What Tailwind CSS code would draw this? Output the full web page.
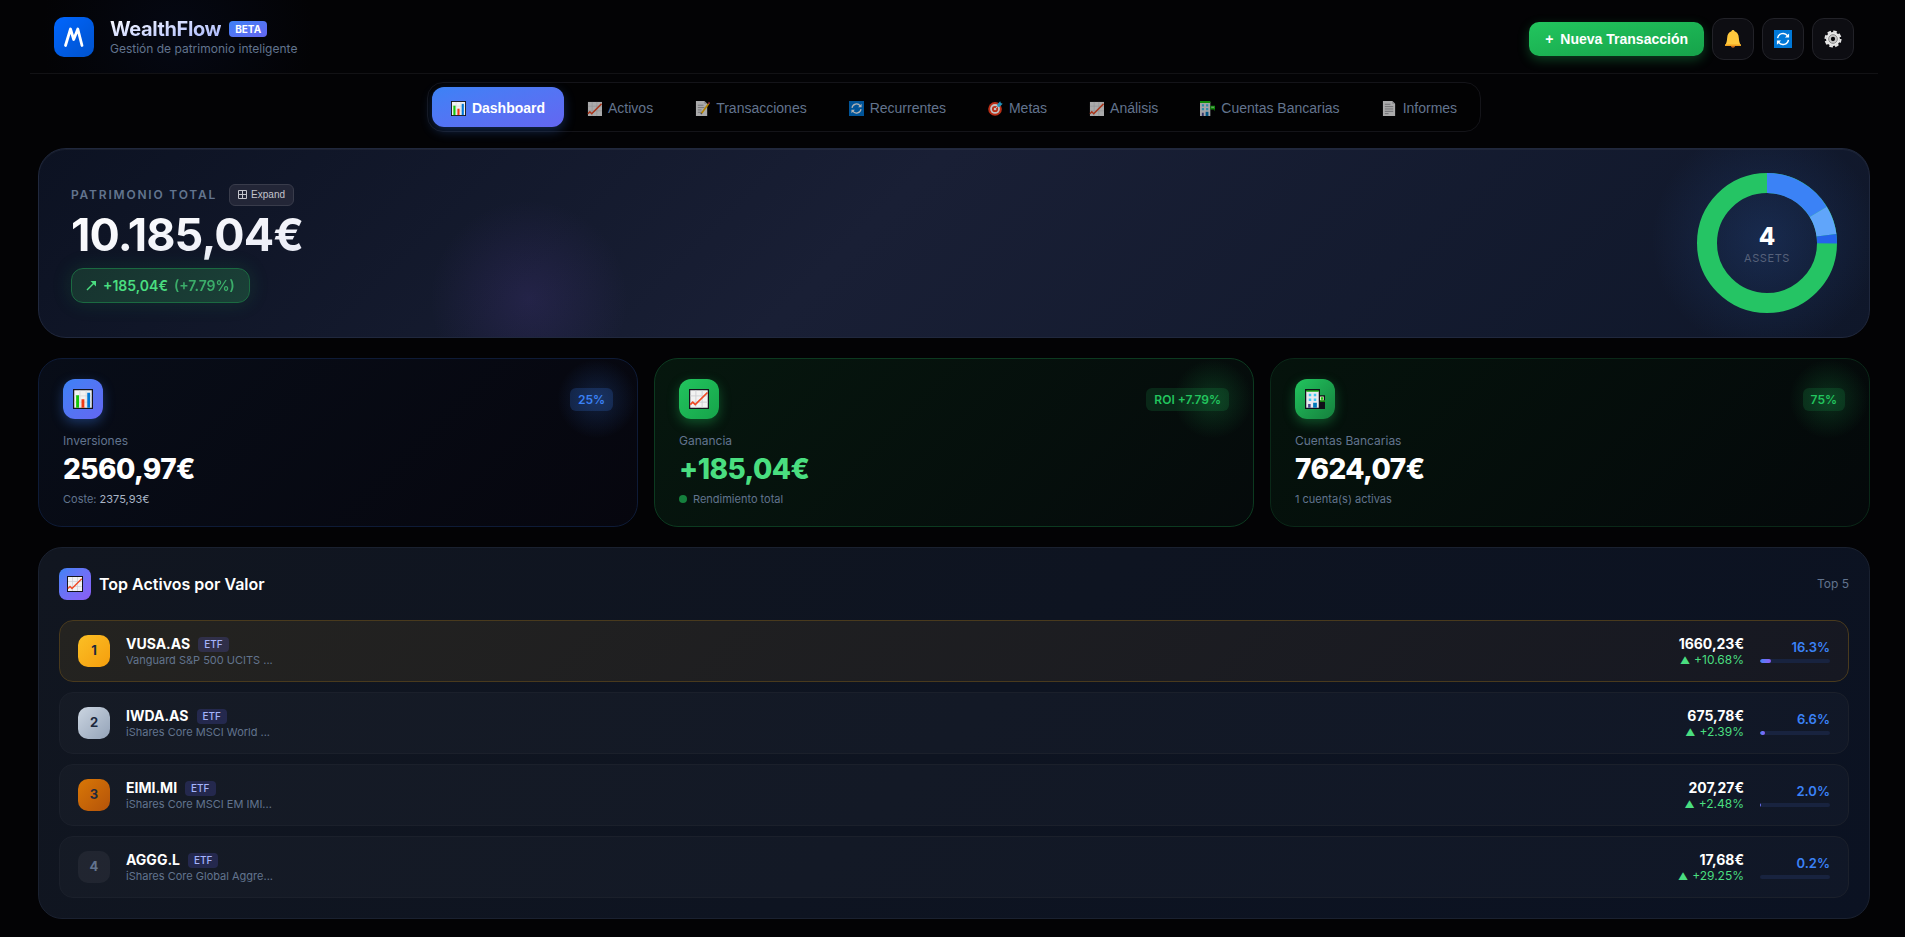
<!DOCTYPE html>
<html lang="es">

<head>
  <meta charset="UTF-8">
  <meta name="viewport" content="width=device-width, initial-scale=1.0">
  <title>WealthFlow</title>
  <script src="https://cdn.jsdelivr.net/npm/@tailwindcss/browser@4"></script>
</head>

<body class="min-h-screen bg-[#030305] font-['Inter',sans-serif] text-white">
  <!-- Icon sprite -->
  <svg class="hidden">
    <symbol id="i-bars" viewBox="0 0 16 16">
      <path fill="#14141c" d="M0 0h16v16H0z" />
      <path fill="#f2f2f2" d="M1 1h14v14H1z" />
      <path stroke="#d5d5d8" stroke-width=".6" d="M5.5 1v14M10.5 1v14M1 5.5h14M1 10.5h14" />
      <path fill="#16c60c" d="M2.5 5h2.3v10H2.5z" />
      <path fill="#f03a17" d="M6.8 8.2h2.3V15H6.8z" />
      <path fill="#0078d7" d="M11.4 3h2.3v12h-2.3z" />
    </symbol>
    <symbol id="i-trend" viewBox="0 0 16 16">
      <path fill="#14141c" d="M0 0h16v16H0z" />
      <path fill="#f2f2f2" d="M1 1h14v14H1z" />
      <path stroke="#cfcfd2" stroke-width=".7" d="M5.5 1v14M10.5 1v14M1 5.5h14M1 10.5h14" />
      <path fill="none" stroke="#f04a24" stroke-width="1.4" d="M1 12.5l2-2 2 2L14.8 2.8" />
    </symbol>
    <symbol id="i-trend-flat" viewBox="0 0 16 16">
      <path fill="#f2f2f2" d="M1 1h15v15H1z" />
      <path stroke="#cfcfd2" stroke-width=".7" d="M5.5 1v15M10.5 1v15M1 5.5h15M1 10.5h15" />
      <path fill="none" stroke="#f04a24" stroke-width="1.6" d="M1 13.5l2-2 2 2L15.5 3" />
    </symbol>
    <symbol id="i-memo" viewBox="0 0 16 16">
      <path fill="#f2f2f2" d="M1 0h9l3 3v13H1z" />
      <path fill="#b9b9bd" d="M10 0l3 3h-3z" />
      <path stroke="#a0a0a5" d="M3 4.5h6M3 7h7M3 9.500h4M3 12h5" />
      <path stroke="#ffb900" stroke-width="1.8" d="M7 13L14.500 3" />
      <path stroke="#e74856" stroke-width="1.8" d="M14.500 3l1-1.400" />
      <path stroke="#55555c" stroke-width="1.400" d="M6.300 14l.7-1" />
    </symbol>
    <symbol id="i-sync" viewBox="0 0 16 16">
      <path fill="#0078d7" d="M0 0h16v16H0z" />
      <path fill="none" stroke="#fff" stroke-width="1.300" d="M3.200 7.300a4.900 4.900 0 0 1 8.800-2.200M12.800 8.700A4.900 4.900 0 0 1 4 10.900" />
      <path fill="#fff" d="M13.400 3v3.700H9.700zM2.600 13V9.300h3.700z" />
    </symbol>
    <symbol id="i-target" viewBox="0 0 16 16">
      <circle cx="7.500" cy="8.500" r="7.300" fill="#e8391b" />
      <circle cx="7.500" cy="8.500" r="5.200" fill="#f2f2f2" />
      <circle cx="7.500" cy="8.500" r="3.300" fill="#e8391b" />
      <circle cx="7.500" cy="8.500" r="1.400" fill="#f2f2f2" />
      <path stroke="#f2f2f2" d="M7.500 8.500l4-4" />
      <path fill="#26b5e8" d="M10 3.500L13 .3l.7 1.700 2 .8-3.300 3.200-2.400.2z" />
    </symbol>
    <symbol id="i-bank" viewBox="0 0 16 16">
      <path fill="#101018" d="M0 0h12v5h4v11H0z" />
      <path fill="#e9e9ee" d="M1 1.500h10V15H1z" />
      <path fill="#16a80c" d="M1 1h10v1.200H1zM12 9h4v1.200h-4z" />
      <path fill="#d8f0b8" d="M12 6h3v3h-3z" />
      <path fill="#16c60c" d="M12.800 6.500h1.600v2h-1.600z" />
      <path fill="#41c8f0" d="M3 3.700h2v2H3zM7 3.700h2v2H7zM3 7.500h2v2H3zM7 7.500h2v2H7z" />
      <path fill="#0078b8" d="M6.500 11h3v4h-3z" />
      <path fill="#4a4a90" d="M2.500 12h2v3h-2z" />
    </symbol>
    <symbol id="i-bank-flat" viewBox="0 0 16 16">
      <path fill="#e9e9ee" d="M0 1h11v15H0z" />
      <path fill="#16c60c" d="M0 0h11v2H0zM11 5h5v4h-5z" />
      <path fill="#8be08b" d="M12 6h3v1.500h-3z" />
      <path fill="#16a80c" d="M15 9h1v1h-1z" />
      <path fill="#41c8f0" d="M2 3.500h2.300v2.300H2zM6.500 3.500h2.300v2.300H6.500zM2 7.500h2.300v2.300H2zM6.500 7.500h2.300v2.300H6.500z" />
      <path fill="#0078b8" d="M6 11.500h3V16H6z" />
      <path fill="#4a4a90" d="M2 12.500h2V16H2z" />
    </symbol>
    <symbol id="i-page" viewBox="0 0 16 16">
      <path fill="#f2f2f2" d="M1 0h10l3 3v13H1z" />
      <path fill="#b9b9bd" d="M11 0l3 3h-3z" />
      <path stroke="#98989d" d="M3 3.500h6M3 6h9M3 8.500h9M3 11h9M3 13.500h4" />
    </symbol>
    <symbol id="i-bell" viewBox="0 0 16 16">
      <path fill="#c8671b" d="M6 13.500h4c0 1.300-.8 2.200-2 2.200s-2-.9-2-2.200z" />
      <path fill="#ffc83d" d="M8 0c.8 0 1.300.5 1.400 1.200C12 2 13 4.200 13.200 7c.2 3 .6 4.700 1.800 6.200v1H1v-1C2.200 11.700 2.600 10 2.800 7 3 4.200 4 2 6.600 1.200 6.700.5 7.200 0 8 0z" />
      <path fill="#f0a01e" d="M1.200 12.900h13.600l.2 1.300H1z" />
    </symbol>
    <symbol id="i-gear" viewBox="0 0 16 16">
      <circle cx="8" cy="8" r="6.700" fill="none" stroke="#e6e6e6" stroke-width="1.800" stroke-dasharray="3.262 2" />
      <circle cx="8" cy="8" r="6.200" fill="#e6e6e6" />
      <circle cx="8" cy="8" r="3.900" fill="#c8c8c8" stroke="#858585" stroke-width=".8" />
      <circle cx="8" cy="8" r="1.900" fill="#050508" />
    </symbol>
  </svg>

  <div class="pr-[27px] pl-[30px]">
    <!-- Header -->
    <header class="flex h-[74px] items-center justify-between border-b border-[#121215] bg-[radial-gradient(circle_at_8%_50%,#050813_0,transparent_8%)] px-6">
      <div class="flex items-center gap-4">
        <div class="flex size-10 items-center justify-center rounded-[10px] bg-linear-to-br from-[#0066ff] to-[#0052cc]">
          <svg class="size-6" viewBox="0 0 24 24" fill="none" stroke="#fff" stroke-width="2.800" stroke-linecap="round" stroke-linejoin="round">
            <path d="M3.500 20.500L8.500 4l3.200 10.500L15.800 4l4.200 16.500" />
          </svg>
        </div>
        <div>
          <div class="flex items-center gap-2">
            <h1 class="bg-linear-to-br from-white to-[#a5b4fc] bg-clip-text text-[20px] leading-6 font-bold tracking-[-0.02em] text-transparent">WealthFlow</h1>
            <span class="rounded bg-linear-to-br from-[#3b82f6] to-[#6366f1] px-[6px] text-[10px] leading-4 font-bold">BETA</span>
          </div>
          <p class="text-[12px] leading-4 text-slate-500">Gestión de patrimonio inteligente</p>
        </div>
      </div>
      <div class="flex items-center gap-2 pt-1">
        <button class="h-[34px] rounded-[10px] bg-linear-to-br from-[#22c55e] to-[#16a34a] px-4 pt-px font-['Liberation_Sans',sans-serif] text-[14px] font-bold shadow-[0_4px_12px_rgba(34,197,94,0.3)]"><span class="mr-[3px]">+</span> Nueva Transacción</button>
        <button aria-label="Notificaciones" class="flex size-[42px] items-center justify-center rounded-[12px] border border-[#222228] bg-[#0d0d12]">
          <svg class="size-[18px]"><use href="#i-bell" /></svg>
        </button>
        <button aria-label="Actualizar" class="flex size-[42px] items-center justify-center rounded-[12px] border border-[#222228] bg-[#0d0d12]">
          <svg class="size-[18px]"><use href="#i-sync" /></svg>
        </button>
        <button aria-label="Ajustes" class="flex size-[42px] items-center justify-center rounded-[12px] border border-[#222228] bg-[#0d0d12]">
          <svg class="size-[18px]"><use href="#i-gear" /></svg>
        </button>
      </div>
    </header>

    <div class="px-2">
      <!-- Tabs -->
      <nav class="mx-auto mt-2 flex w-fit gap-1 rounded-[16px] border border-[#141419] bg-[#020203] p-1 font-['Liberation_Sans',sans-serif] text-[14px] text-slate-500">
        <button class="flex h-10 items-center gap-[6px] rounded-[12px] bg-linear-to-br from-[#3b82f6] to-[#6366f1] px-[19px] pt-[2px] font-bold text-white shadow-[0_4px_12px_rgba(59,130,246,0.3)]">
          <svg class="size-[15px]"><use href="#i-bars" /></svg>Dashboard
        </button>
        <button class="flex h-10 items-center gap-[6px] rounded-[12px] px-[19px] pt-[2px]">
          <svg class="size-[15px] opacity-70"><use href="#i-trend-flat" /></svg>Activos
        </button>
        <button class="flex h-10 items-center gap-[6px] rounded-[12px] px-[19px] pt-[2px]">
          <svg class="size-[15px] opacity-70"><use href="#i-memo" /></svg>Transacciones
        </button>
        <button class="flex h-10 items-center gap-[6px] rounded-[12px] px-[19px] pt-[2px]">
          <svg class="size-[15px] opacity-70"><use href="#i-sync" /></svg>Recurrentes
        </button>
        <button class="flex h-10 items-center gap-[6px] rounded-[12px] px-[19px] pt-[2px]">
          <svg class="size-[15px] opacity-80"><use href="#i-target" /></svg>Metas
        </button>
        <button class="flex h-10 items-center gap-[6px] rounded-[12px] px-[19px] pt-[2px]">
          <svg class="size-[15px] opacity-70"><use href="#i-trend-flat" /></svg>Análisis
        </button>
        <button class="flex h-10 items-center gap-[6px] rounded-[12px] px-[19px] pt-[2px]">
          <svg class="size-[15px] opacity-70"><use href="#i-bank-flat" /></svg>Cuentas Bancarias
        </button>
        <button class="flex h-10 items-center gap-[6px] rounded-[12px] px-[19px] pt-[2px]">
          <svg class="size-[15px] opacity-70"><use href="#i-page" /></svg>Informes
        </button>
      </nav>

      <!-- Net worth -->
      <section class="relative mt-4 flex items-center justify-between overflow-hidden rounded-[28px] border border-[#20283d] bg-[linear-gradient(135deg,#0c1222_0%,#191f35_45%,#0f172a_100%)] px-8 py-6 shadow-[inset_0_1px_0_rgba(255,255,255,0.05)]">
        <div class="absolute -top-10 right-0 size-[260px] bg-[radial-gradient(circle_at_60%_50%,rgba(59,130,246,0.17)_0,transparent_56%)]"></div>
        <div class="absolute top-[50px] left-[390px] size-[200px] bg-[radial-gradient(circle,rgba(139,92,246,0.12)_0,transparent_70%)]"></div>
        <div class="relative">
          <div class="flex items-center gap-3">
            <span class="text-[12px] leading-4 font-semibold tracking-[0.15em] text-slate-500">PATRIMONIO TOTAL</span>
            <button class="flex h-[22px] items-center gap-1 rounded-[6px] border border-[#393c4b] bg-[#232637] px-2 font-['Liberation_Sans',sans-serif] text-[10px] font-medium text-[#c4c5cc]">
              <svg class="size-[9px]" viewBox="0 0 9 9" fill="none" stroke="currentColor"><path d="M.5.5h8v8h-8zM4.500.5v8M.5 4.500h8" /></svg>Expand
            </button>
          </div>
          <div class="mt-1 bg-linear-to-br from-white to-[#e8eaf5] bg-clip-text text-[45px] leading-[50px] font-bold tracking-[-0.02em] text-transparent">10.185,04€</div>
          <div class="mt-2 flex h-[35px] w-fit items-center gap-[6px] rounded-[12px] border border-[#1b6a41] bg-[linear-gradient(135deg,#17332f,#1a4037)] px-[14px] text-[14px] font-semibold text-[#4ade80] shadow-[0_0_20px_rgba(34,197,94,0.15)]">
            <svg class="size-[11px]" viewBox="0 0 11 11"><path stroke="currentColor" stroke-width="1.500" d="M1 10l7.500-7.500" /><path fill="currentColor" d="M4.500 1H10v5.500z" /></svg>
            <span>+185,04€</span>
            <span class="opacity-70">(+7.79%)</span>
          </div>
        </div>
        <div class="relative grid size-[140px] place-items-center">
          <svg class="col-start-1 row-start-1 size-[140px] -rotate-90" viewBox="0 0 140 140" fill="none" stroke-width="20">
            <circle cx="70" cy="70" r="60" stroke="#25c464" pathLength="100" />
            <circle cx="70" cy="70" r="60" stroke="#3b82f6" pathLength="100" stroke-dasharray="16.300 100" />
            <circle cx="70" cy="70" r="60" stroke="#60a5fa" pathLength="100" stroke-dasharray="6.600 100" stroke-dashoffset="-16.300" />
            <circle cx="70" cy="70" r="60" stroke="#2563eb" pathLength="100" stroke-dasharray="2.200 100" stroke-dashoffset="-22.900" />
          </svg>
          <div class="col-start-1 row-start-1 pt-[3px] text-center">
            <div class="text-[24px] leading-[26px] font-extrabold">4</div>
            <div class="text-[11px] leading-4 tracking-wider text-[#56617a]">ASSETS</div>
          </div>
        </div>
      </section>

      <!-- Summary cards -->
      <section class="mt-5 grid grid-cols-3 gap-4">
        <div class="relative overflow-hidden rounded-[24px] border border-[#0e1b37] bg-[linear-gradient(135deg,#080d18,#06060e)] px-6 py-5">
          <div class="absolute top-0 right-0 size-20 bg-[radial-gradient(circle,rgba(59,130,246,0.2)_0,transparent_70%)]"></div>
          <div class="relative flex items-center justify-between">
            <div class="flex size-10 items-center justify-center rounded-[12px] bg-linear-to-br from-[#3b82f6] to-[#6366f1] shadow-[0_4px_12px_rgba(59,130,246,0.35)]">
              <svg class="size-5"><use href="#i-bars" /></svg>
            </div>
            <span class="rounded-[6px] bg-[#3b82f6]/20 px-2 text-[12px] leading-[23px] font-semibold text-[#3b82f6]">25%</span>
          </div>
          <div class="mt-3 text-[12px] leading-5 text-slate-500">Inversiones</div>
          <div class="text-[28px] leading-9 font-extrabold tracking-[-0.02em]">2560,97€</div>
          <div class="mt-[5px] text-[11px] leading-[14px] text-slate-500">Coste: <span class="text-[#a9b5c6]">2375,93€</span></div>
        </div>

        <div class="relative overflow-hidden rounded-[24px] border border-[#0c3a20] bg-[linear-gradient(135deg,#06170e,#050a0b)] px-6 py-5">
          <div class="absolute top-0 right-0 size-20 bg-[radial-gradient(circle,rgba(34,197,94,0.2)_0,transparent_70%)]"></div>
          <div class="relative flex items-center justify-between">
            <div class="flex size-10 items-center justify-center rounded-[12px] bg-linear-to-br from-[#22c55e] to-[#16a34a] shadow-[0_4px_12px_rgba(34,197,94,0.35)]">
              <svg class="size-5"><use href="#i-trend" /></svg>
            </div>
            <span class="rounded-[6px] bg-[#22c55e]/15 px-2 text-[12px] leading-[23px] font-semibold text-[#22c55e]">ROI +7.79%</span>
          </div>
          <div class="mt-3 text-[12px] leading-5 text-slate-500">Ganancia</div>
          <div class="text-[28px] leading-9 font-extrabold tracking-[-0.02em] text-[#4ade80]">+185,04€</div>
          <div class="mt-[5px] flex items-center gap-[6px] text-[11px] leading-[14px] text-slate-500"><span class="size-2 rounded-full bg-[#15803d]"></span>Rendimiento total</div>
        </div>

        <div class="relative overflow-hidden rounded-[24px] border border-[#0a2818] bg-[linear-gradient(135deg,#05130c,#04080a)] px-6 py-5">
          <div class="absolute top-0 right-0 size-20 bg-[radial-gradient(circle,rgba(34,197,94,0.2)_0,transparent_70%)]"></div>
          <div class="relative flex items-center justify-between">
            <div class="flex size-10 items-center justify-center rounded-[12px] bg-linear-to-br from-[#22c55e] to-[#15803d] shadow-[0_4px_12px_rgba(34,197,94,0.35)]">
              <svg class="size-5"><use href="#i-bank" /></svg>
            </div>
            <span class="rounded-[6px] bg-[#22c55e]/15 px-2 text-[12px] leading-[23px] font-semibold text-[#22c55e]">75%</span>
          </div>
          <div class="mt-3 text-[12px] leading-5 text-slate-500">Cuentas Bancarias</div>
          <div class="text-[28px] leading-9 font-extrabold tracking-[-0.02em]">7624,07€</div>
          <div class="mt-[5px] text-[11px] leading-[14px] text-slate-500">1 cuenta(s) activas</div>
        </div>
      </section>

      <!-- Top assets -->
      <section class="mt-5 rounded-[24px] border border-[#1a2130] bg-[linear-gradient(135deg,#111620,#0b1222)] p-5">
        <div class="flex items-center justify-between">
          <div class="flex items-center gap-2">
            <div class="flex size-8 items-center justify-center rounded-[8px] bg-linear-to-br from-[#3b82f6] to-[#8b5cf6]">
              <svg class="size-4"><use href="#i-trend" /></svg>
            </div>
            <h2 class="text-[16px] leading-6 font-semibold">Top Activos por Valor</h2>
          </div>
          <span class="text-[12px] text-slate-500">Top 5</span>
        </div>

        <ul class="mt-5 flex flex-col gap-[10px]">
          <li class="flex items-center gap-4 rounded-[14px] border border-[#493a1d] bg-[linear-gradient(135deg,#242320,#161822)] px-[18px] py-[14px]">
            <span class="flex size-8 items-center justify-center rounded-[10px] bg-linear-to-br from-[#fbbf24] to-[#f59e0b] text-[13px] font-bold text-slate-800">1</span>
            <div class="flex-1">
              <div class="flex items-center gap-2 text-[14px] leading-[18px] font-bold">VUSA.AS <span class="rounded bg-[#6366f1]/20 px-[6px] text-[10px] leading-[15px] font-medium text-[#a5b4fc]">ETF</span></div>
              <div class="text-[11px] leading-[14px] text-slate-500">Vanguard S&amp;P 500 UCITS ...</div>
            </div>
            <div>
              <div class="text-right text-[14px] leading-[18px] font-bold">1660,23€</div>
              <div class="flex justify-end gap-1 text-[12px] leading-[14px] text-[#4ade80]"><span class="text-[10px]">▲</span>+10.68%</div>
            </div>
            <div class="w-[70px] text-right text-[13px] leading-4 font-semibold text-[#3b82f6]">16.3%
              <div class="mt-1 h-1 overflow-hidden rounded-full bg-[#18233f]"><div class="h-full rounded-full bg-linear-to-r from-[#3b82f6] to-[#8b5cf6]" style="width: 16.3%"></div></div>
            </div>
          </li>
          <li class="flex items-center gap-4 rounded-[14px] border border-[#1b202b] bg-white/[0.025] px-[18px] py-[14px]">
            <span class="flex size-8 items-center justify-center rounded-[10px] bg-linear-to-br from-[#cbd5e1] to-[#94a3b8] text-[13px] font-bold text-slate-800">2</span>
            <div class="flex-1">
              <div class="flex items-center gap-2 text-[14px] leading-[18px] font-bold">IWDA.AS <span class="rounded bg-[#6366f1]/20 px-[6px] text-[10px] leading-[15px] font-medium text-[#a5b4fc]">ETF</span></div>
              <div class="text-[11px] leading-[14px] text-slate-500">iShares Core MSCI World ...</div>
            </div>
            <div>
              <div class="text-right text-[14px] leading-[18px] font-bold">675,78€</div>
              <div class="flex justify-end gap-1 text-[12px] leading-[14px] text-[#4ade80]"><span class="text-[10px]">▲</span>+2.39%</div>
            </div>
            <div class="w-[70px] text-right text-[13px] leading-4 font-semibold text-[#3b82f6]">6.6%
              <div class="mt-1 h-1 overflow-hidden rounded-full bg-[#18233f]"><div class="h-full rounded-full bg-linear-to-r from-[#3b82f6] to-[#8b5cf6]" style="width: 6.6%"></div></div>
            </div>
          </li>
          <li class="flex items-center gap-4 rounded-[14px] border border-[#1b202b] bg-white/[0.025] px-[18px] py-[14px]">
            <span class="flex size-8 items-center justify-center rounded-[10px] bg-linear-to-br from-[#d97706] to-[#b45309] text-[13px] font-bold text-slate-800">3</span>
            <div class="flex-1">
              <div class="flex items-center gap-2 text-[14px] leading-[18px] font-bold">EIMI.MI <span class="rounded bg-[#6366f1]/20 px-[6px] text-[10px] leading-[15px] font-medium text-[#a5b4fc]">ETF</span></div>
              <div class="text-[11px] leading-[14px] text-slate-500">iShares Core MSCI EM IMI...</div>
            </div>
            <div>
              <div class="text-right text-[14px] leading-[18px] font-bold">207,27€</div>
              <div class="flex justify-end gap-1 text-[12px] leading-[14px] text-[#4ade80]"><span class="text-[10px]">▲</span>+2.48%</div>
            </div>
            <div class="w-[70px] text-right text-[13px] leading-4 font-semibold text-[#3b82f6]">2.0%
              <div class="mt-1 h-1 overflow-hidden rounded-full bg-[#18233f]"><div class="h-full rounded-full bg-linear-to-r from-[#3b82f6] to-[#8b5cf6]" style="width: 2%"></div></div>
            </div>
          </li>
          <li class="flex items-center gap-4 rounded-[14px] border border-[#1b202b] bg-white/[0.025] px-[18px] py-[14px]">
            <span class="flex size-8 items-center justify-center rounded-[10px] bg-white/5 text-[13px] font-bold text-slate-500">4</span>
            <div class="flex-1">
              <div class="flex items-center gap-2 text-[14px] leading-[18px] font-bold">AGGG.L <span class="rounded bg-[#6366f1]/20 px-[6px] text-[10px] leading-[15px] font-medium text-[#a5b4fc]">ETF</span></div>
              <div class="text-[11px] leading-[14px] text-slate-500">iShares Core Global Aggre...</div>
            </div>
            <div>
              <div class="text-right text-[14px] leading-[18px] font-bold">17,68€</div>
              <div class="flex justify-end gap-1 text-[12px] leading-[14px] text-[#4ade80]"><span class="text-[10px]">▲</span>+29.25%</div>
            </div>
            <div class="w-[70px] text-right text-[13px] leading-4 font-semibold text-[#3b82f6]">0.2%
              <div class="mt-1 h-1 overflow-hidden rounded-full bg-[#18233f]"><div class="h-full rounded-full bg-linear-to-r from-[#3b82f6] to-[#8b5cf6]" style="width: 0.2%"></div></div>
            </div>
          </li>
        </ul>
      </section>
    </div>
  </div>
</body>

</html>
